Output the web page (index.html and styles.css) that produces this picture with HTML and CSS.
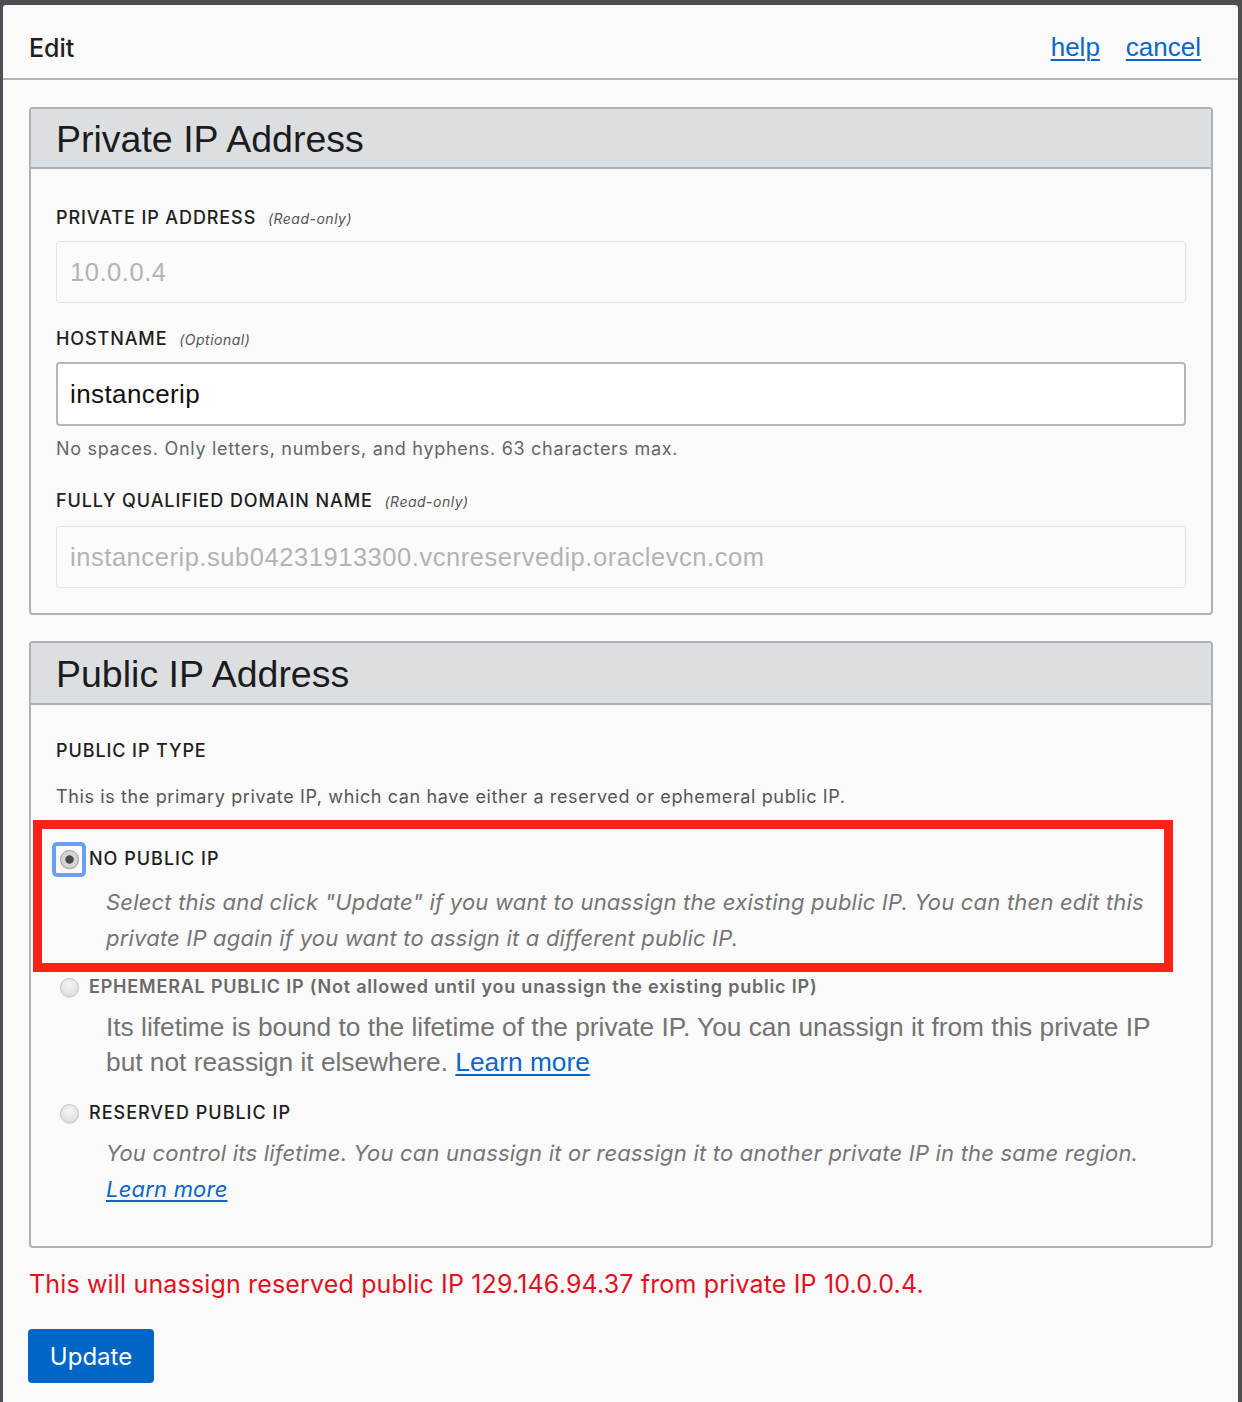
FILE: index.html
```html
<!DOCTYPE html>
<html lang="en">
<head>
<meta charset="utf-8">
<title>Edit Private IP</title>
<link rel="stylesheet" href="styles.css">
</head>
<body>
<div class="panel">
  <header class="panel-head">
    <h1 class="panel-title">Edit</h1>
    <nav class="panel-links">
      <a href="#" class="link">help</a>
      <a href="#" class="link">cancel</a>
    </nav>
  </header>
  <div class="panel-body">
    <section class="box">
      <h2 class="box-title">Private IP Address</h2>
      <div class="box-body">
        <div class="field">
          <div class="lbl">PRIVATE IP ADDRESS <span class="hint">(Read-only)</span></div>
          <div class="input input-ro">10.0.0.4</div>
        </div>
        <div class="field">
          <div class="lbl">HOSTNAME <span class="hint">(Optional)</span></div>
          <div class="input input-edit">instancerip</div>
          <p class="help">No spaces. Only letters, numbers, and hyphens. 63 characters max.</p>
        </div>
        <div class="field field-last">
          <div class="lbl">FULLY QUALIFIED DOMAIN NAME <span class="hint">(Read-only)</span></div>
          <div class="input input-ro">instancerip.sub04231913300.vcnreservedip.oraclevcn.com</div>
        </div>
      </div>
    </section>

    <section class="box box-public">
      <h2 class="box-title box-title-public">Public IP Address</h2>
      <div class="box-body box-body-public">
        <div class="lbl lbl-plain">PUBLIC IP TYPE</div>
        <p class="help help-type">This is the primary private IP, which can have either a reserved or ephemeral public IP.</p>

        <div class="option option-first">
          <div class="annot"></div>
          <div class="opt-row">
            <span class="radio radio-on radio-focus"></span>
            <span class="opt-label">NO PUBLIC IP</span>
          </div>
          <p class="opt-desc opt-italic">Select this and click "Update" if you want to unassign the existing public IP. You can then edit this private IP again if you want to assign it a different public IP.</p>
        </div>

        <div class="option">
          <div class="opt-row">
            <span class="radio"></span>
            <span class="opt-label opt-disabled">EPHEMERAL PUBLIC IP (Not allowed until you unassign the existing public IP)</span>
          </div>
          <p class="opt-desc opt-plain">Its lifetime is bound to the lifetime of the private IP. You can unassign it from this private IP but not reassign it elsewhere. <a href="#" class="link">Learn more</a></p>
        </div>

        <div class="option">
          <div class="opt-row">
            <span class="radio"></span>
            <span class="opt-label">RESERVED PUBLIC IP</span>
          </div>
          <p class="opt-desc opt-italic opt-last">You control its lifetime. You can unassign it or reassign it to another private IP in the same region. <a href="#" class="link">Learn more</a></p>
        </div>
      </div>
    </section>

    <p class="error">This will unassign reserved public IP 129.146.94.37 from private IP 10.0.0.4.</p>
    <button class="btn" type="button">Update</button>
  </div>
</div>
</body>
</html>
```

FILE: styles.css
```css
html, body {
  margin: 0;
  padding: 0;
}
body {
  background: #4e4f52;
  width: 1242px;
  height: 1402px;
  overflow: hidden;
  font-family: "Inter", "Liberation Sans", sans-serif;
  color: #222;
}
.panel {
  margin: 5px 4px 0 3px;
  height: 1397px;
  background: #fafafa;
  border-radius: 3px 3px 0 0;
}
.panel-head {
  height: 61px;
  padding: 12px 37px 0 26px;
  display: flex;
  align-items: center;
  justify-content: space-between;
  border-bottom: 2px solid #b3b7bc;
}
.panel-title {
  margin: 0;
  font-size: 25px;
  font-weight: 500;
  color: #1e1e1e;
}
.panel-links {
  display: flex;
  gap: 26px;
}
.link {
  color: #0b66c8;
  text-decoration: underline;
  text-underline-offset: 3px;
  text-decoration-thickness: 2px;
}
.panel-links .link {
  font-family: "Liberation Sans", sans-serif;
  font-size: 26px;
}
.panel-body {
  padding: 27px 25px 0 26px;
}
.box {
  border: 2px solid #adb2b8;
  border-radius: 4px;
}
.box-public {
  margin-top: 26px;
}
.box-title {
  margin: 0;
  background: #dcdfe2;
  border-bottom: 2px solid #adb2b8;
  border-radius: 2px 2px 0 0;
  padding: 10px 25px 8px;
  font-family: "Liberation Sans", sans-serif;
  font-weight: 400;
  font-size: 37.5px;
  line-height: 40px;
  color: #1c1c1c;
}
.box-title-public {
  padding: 11px 25px 9px;
}
.box-body {
  padding: 38px 25px 25px;
}
.box-body-public {
  padding: 35px 25px 39px;
}
.field {
  margin-bottom: 25px;
}
.field-last {
  margin-bottom: 0;
}
.lbl {
  font-size: 18px;
  line-height: 22px;
  height: 22px;
  letter-spacing: 0.9px;
  font-weight: 500;
  color: #1e1e1e;
  margin-bottom: 12px;
}
.field-last .lbl {
  margin-bottom: 14px;
}
.lbl-plain {
  margin-bottom: 0;
}
.hint {
  font-size: 14px;
  line-height: 10px;
  font-style: italic;
  font-weight: 400;
  color: #555;
  letter-spacing: 0.5px;
  margin-left: 6px;
}
.input {
  box-sizing: border-box;
  border-radius: 4px;
  padding: 0 13px;
  display: flex;
  align-items: center;
  font-family: "Liberation Sans", sans-serif;
}
.input-ro {
  height: 62px;
  border: 1px solid #e1e4e7;
  background: #fbfbfb;
  color: #b3b3b3;
  font-size: 25.5px;
  letter-spacing: 0.55px;
}
.input-edit {
  height: 64px;
  border: 2px solid #b3b8be;
  background: #fff;
  color: #111;
  font-size: 26px;
  letter-spacing: 0.4px;
  padding: 0 12px;
}
.help {
  margin: 12px 0 30px;
  font-size: 18px;
  line-height: 22px;
  letter-spacing: 0.7px;
  color: #666;
}
.help-type {
  margin: 24px 0 0;
  letter-spacing: 0.62px;
  color: #555;
}
.option {
  position: relative;
}
.option-first {
  margin-top: 40px;
}
.annot {
  position: absolute;
  left: -23px;
  top: -28px;
  width: 1140px;
  height: 152px;
  box-sizing: border-box;
  border: 9.5px solid #fb2318;
}
.opt-row {
  display: flex;
  align-items: center;
  gap: 10px;
  height: 22px;
  padding-left: 4px;
}
.radio {
  position: relative;
  flex: none;
  width: 19px;
  height: 19px;
  box-sizing: border-box;
  border-radius: 50%;
  border: 1px solid #c4c4c4;
  background: radial-gradient(circle at 50% 35%, #f4f4f4 0%, #e2e2e2 70%, #d6d6d6 100%);
  box-shadow: 0 1px 1px rgba(0,0,0,0.12);
}
.radio-on {
  background: radial-gradient(circle, #4a4a4a 0 3.8px, #d6d6d6 4.6px, #d0d0d0 100%);
  border-color: #9c9c9c;
}
.radio-focus::before {
  content: "";
  position: absolute;
  left: -9px;
  top: -9px;
  right: -8px;
  bottom: -9px;
  border: 4px solid #6a9ff2;
  border-radius: 5px;
}
.opt-label {
  font-size: 18px;
  line-height: 22px;
  letter-spacing: 1px;
  font-weight: 500;
  color: #1e1e1e;
}
.opt-disabled {
  color: #6a6a6a;
  font-weight: 600;
  letter-spacing: 0.8px;
}
.opt-desc {
  margin: 0 0 20px 50px;
}
.opt-italic {
  margin-top: 14px;
  font-style: italic;
  font-size: 22px;
  line-height: 36px;
  letter-spacing: 0.2px;
  color: #757575;
}
.opt-plain {
  margin-top: 12px;
  margin-bottom: 22px;
  font-family: "Liberation Sans", sans-serif;
  font-size: 26.3px;
  line-height: 35px;
  letter-spacing: 0;
  color: #737373;
}
.opt-last {
  margin-top: 11px;
  margin-bottom: 0;
}
.error {
  margin: 21px 0 0 0;
  font-size: 25px;
  line-height: 30px;
  letter-spacing: 0.16px;
  color: #e2111f;
}
.btn {
  margin-top: 30px;
  margin-left: -1px;
  width: 126px;
  height: 54px;
  border: none;
  border-radius: 4px;
  background: #0066c6;
  color: #fff;
  font-family: "Inter", "Liberation Sans", sans-serif;
  font-size: 24px;
  padding: 0;
}
```
